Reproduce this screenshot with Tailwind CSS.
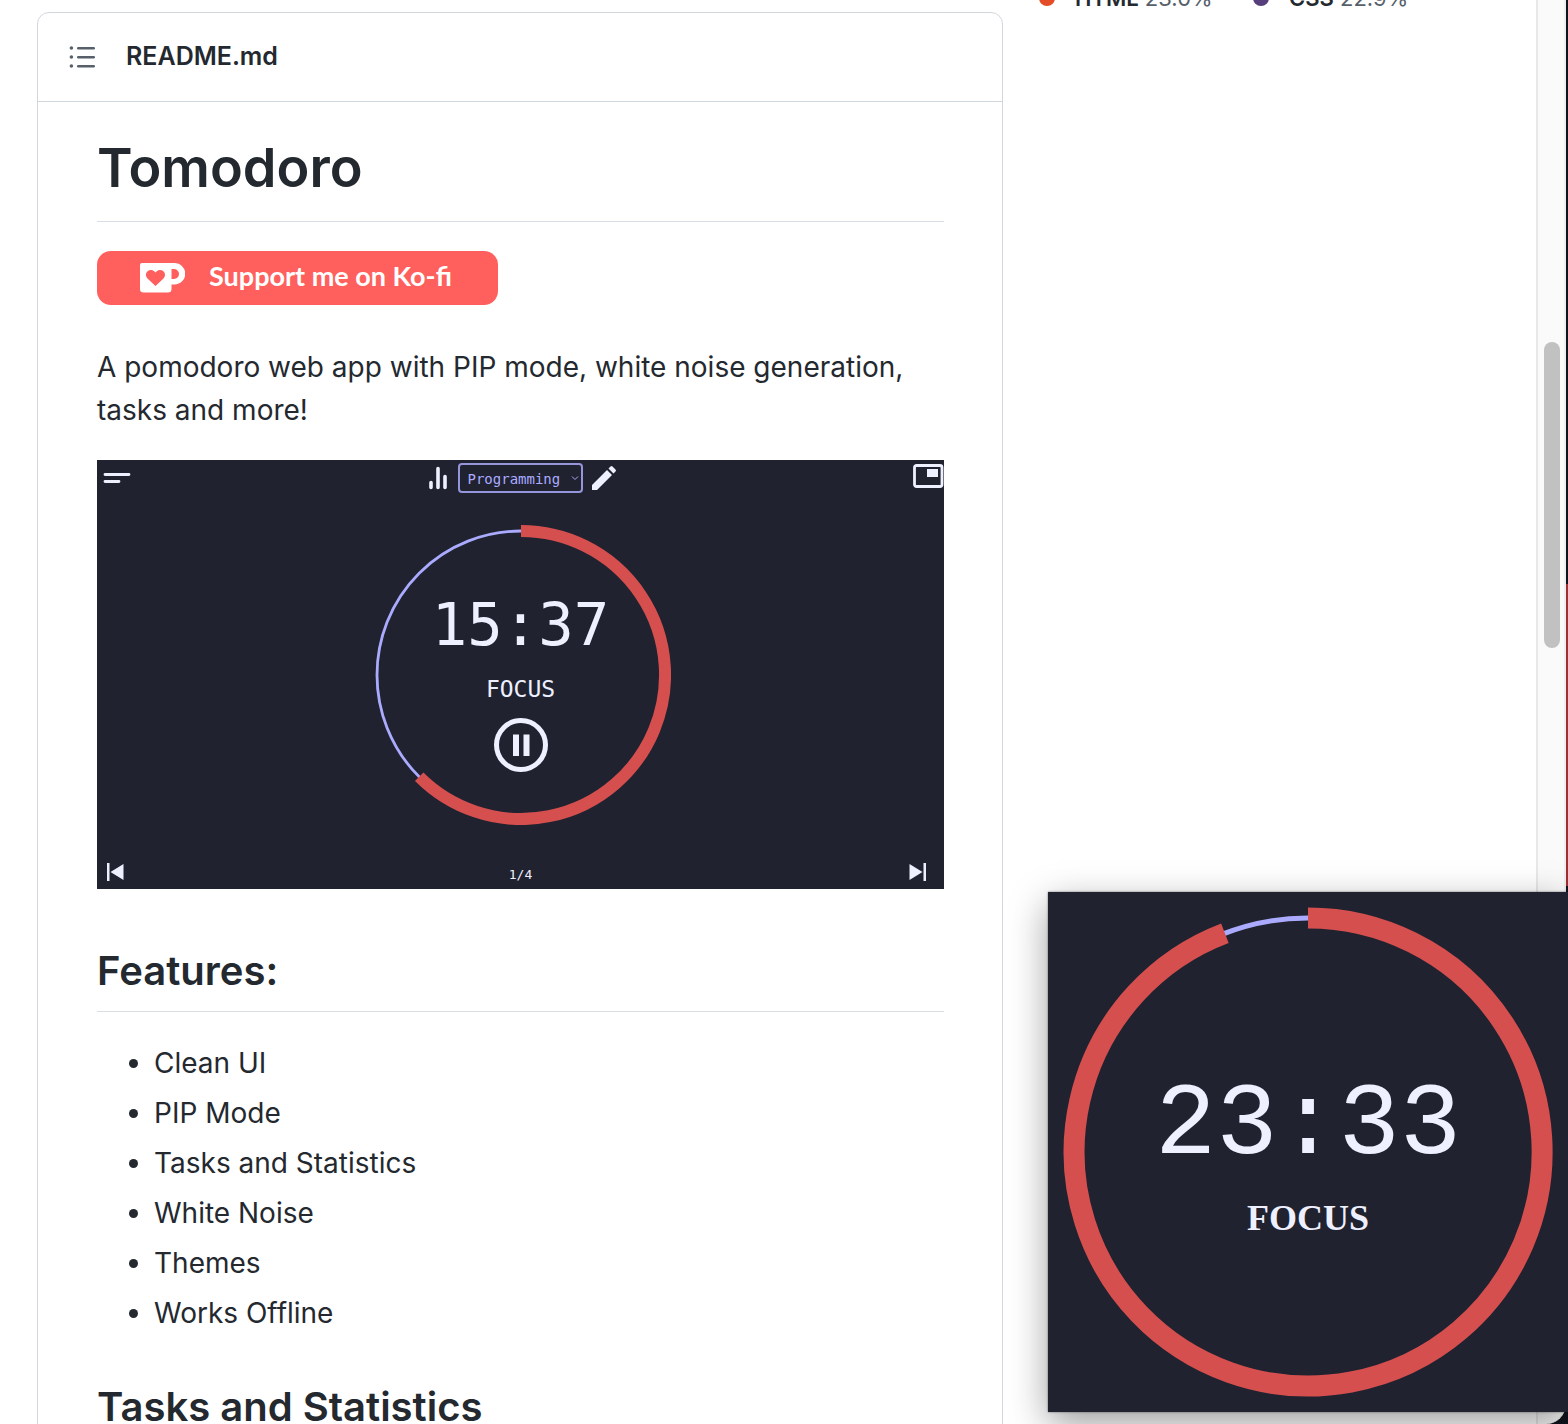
<!DOCTYPE html>
<html lang="en">
<head>
<meta charset="utf-8">
<meta name="viewport" content="width=device-width, initial-scale=1">
<title>Tomodoro README</title>
<script src="https://cdn.jsdelivr.net/npm/@tailwindcss/browser@4"></script>
</head>
<body class="h-screen overflow-hidden bg-[#10131c] font-['Inter',sans-serif] text-[#24292f]">
<div class="relative flex h-full">
  <!-- Page content -->
  <div class="grid min-w-0 flex-1 grid-cols-[966fr_533fr] overflow-hidden bg-white pl-[37px]">
    <main class="mt-3 h-[1500px] min-w-0 rounded-t-xl border border-[#d0d7de]">
      <header class="flex h-[89px] items-center border-b border-[#d0d7de] pl-[30px]">
        <button type="button" aria-label="Table of contents" class="mr-7">
          <svg class="block h-[30px] w-[30px]" viewBox="0 0 30 30" fill="#57606a">
            <circle cx="3.4" cy="6" r="1.8"/><circle cx="3.4" cy="15" r="1.8"/><circle cx="3.4" cy="24" r="1.8"/>
            <rect x="9" y="5" width="18" height="2.6" rx="1.3"/><rect x="9" y="14" width="18" height="2.6" rx="1.3"/><rect x="9" y="23" width="18" height="2.6" rx="1.3"/>
          </svg>
        </button>
        <a href="#readme" class="text-[25px] font-semibold">README.md</a>
      </header>
      <article id="readme" class="pt-[30px] pr-[58px] pl-[59px]">
        <h1 class="border-b border-[#d8dee4] pb-[17px] text-[54px] leading-[72px] font-semibold">Tomodoro</h1>
        <a href="#kofi" class="mt-[29px] flex h-[54px] w-[401px] items-center rounded-[14px] bg-[#ff5f5d] pl-[43px] font-['Lato',sans-serif] text-[27px] font-bold text-white">
          <svg class="mr-6 h-[30px] w-[45px]" viewBox="0 0 45 30">
            <path fill="#fff" fill-rule="evenodd" d="M2 0H34.500a10.500 10.500 0 0 1 0 21.500H31.500V26a3.500 3.500 0 0 1-3.500 3.500H3.500A3.500 3.500 0 0 1 0 26V2A2 2 0 0 1 2 0ZM31.500 6V16H34a5 5 0 0 0 0-10Z"/>
            <path fill="#ff5f5d" d="M15.500 23 7.500 15.500C3.500 11 8 5.500 12.500 7.200Q14.500 8 15.500 9.500Q16.500 8 18.500 7.200C23 5.500 27.500 11 23.500 15.500Z"/>
          </svg>
          <span class="pb-1">Support me on Ko-fi</span>
        </a>
        <p class="mt-[41px] text-[28px] leading-[43px]">A pomodoro web app with PIP mode, white noise generation, tasks and more!</p>

        <!-- App preview -->
        <section aria-label="Tomodoro timer" class="mt-7 grid aspect-[847/429] bg-[#20222f] font-['DejaVu_Sans_Mono',monospace] text-[#eeefff]">
          <div class="col-start-1 row-start-1 flex items-start justify-between self-start pt-[3px]">
            <button type="button" aria-label="Menu" class="w-[106px] pt-2 pl-1.5">
              <svg class="block h-4 w-7" viewBox="0 0 28 16" stroke="#eeefff" stroke-width="2.800" stroke-linecap="round"><path d="M2 3.500H26M2 10.500H16"/></svg>
            </button>
            <div class="flex items-center">
              <button type="button" aria-label="Statistics" class="mr-2.5">
                <svg class="block h-6 w-5" viewBox="0 0 20 24" stroke="#eeefff" stroke-width="3.600" stroke-linecap="round"><path d="M3 16.500V21.500M10 2.500V21.500M17 10.500V21.500"/></svg>
              </button>
              <div class="relative">
                <select aria-label="Task" class="block h-[30px] w-[125px] appearance-none rounded border-2 border-[#9495da] bg-transparent pt-0.5 pl-2 text-[14px] text-[#aaabff]"><option>Programming</option></select>
                <svg class="pointer-events-none absolute top-3 right-1 h-1.5 w-2" viewBox="0 0 8 6" fill="none" stroke="#aaabff"><path d="M1 1.500 4 4.500 7 1.500"/></svg>
              </div>
              <button type="button" aria-label="Edit" class="ml-2">
                <svg class="block h-[26px] w-[26px]" viewBox="0 0 26 26" fill="#eeefff"><path d="M1 20 16 5 21 10 6 25H1ZM17.500 3.500 19.500 1.500Q20.500.500 21.500 1.500L24.500 4.500Q25.500 5.500 24.500 6.500L22.500 8.500Z"/></svg>
              </button>
            </div>
            <div class="flex w-[103px] justify-end">
              <button type="button" aria-label="Picture in picture">
                <svg class="block h-[26px] w-8" viewBox="0 0 32 26"><rect x="2.500" y="2.500" width="27.500" height="21" rx="2" fill="none" stroke="#eeefff" stroke-width="2.800"/><path fill="#eeefff" d="M15 6H26V14H15Z"/></svg>
              </button>
            </div>
          </div>
          <div class="col-start-1 row-start-1 grid place-self-center">
            <svg class="col-start-1 row-start-1 h-[300px] w-[300px]" viewBox="0 0 300 300" fill="none">
              <circle cx="150" cy="150" r="144" stroke="#aaabff" stroke-width="2.800"/>
              <path d="M150 6A144 144 0 1 1 48.200 251.800" stroke="#d64f4f" stroke-width="12"/>
            </svg>
            <div class="col-start-1 row-start-1 flex flex-col items-center pt-[68px]">
              <div class="text-[59px] leading-[64px]">15:37</div>
              <div class="mt-[18px] text-[23px] leading-7">FOCUS</div>
              <button type="button" aria-label="Pause" class="mt-[14px]">
                <svg class="block h-[56px] w-[56px]" viewBox="0 0 56 56"><circle cx="28" cy="28" r="24.500" fill="none" stroke="#eeefff" stroke-width="5"/><path fill="#eeefff" d="M20 17.500H26V39H20ZM30.500 17.500H36.500V39H30.500Z"/></svg>
              </button>
            </div>
          </div>
          <div class="col-start-1 row-start-1 flex items-center justify-between self-end pr-[17px] pb-2 pl-[9px]">
            <button type="button" aria-label="Previous"><svg class="block h-[18px] w-[18px]" viewBox="0 0 18 18" fill="#eeefff"><path d="M1 0H3.500V18H1ZM17.500 1V17L4.500 9Z"/></svg></button>
            <span class="pt-1.5 pl-2 text-[13px] leading-3">1/4</span>
            <button type="button" aria-label="Next"><svg class="block h-[18px] w-[18px]" viewBox="0 0 18 18" fill="#eeefff"><path d="M14.500 0H17V18H14.500ZM.500 1V17L13.500 9Z"/></svg></button>
          </div>
        </section>

        <h2 class="mt-[55px] border-b border-[#d8dee4] pb-[13px] text-[40px] leading-[54px] font-semibold">Features:</h2>
        <ul class="mt-[30px] flex list-disc flex-col gap-[7px] pl-[57px] text-[28px] leading-[43px]">
          <li>Clean UI</li>
          <li>PIP Mode</li>
          <li>Tasks and Statistics</li>
          <li>White Noise</li>
          <li>Themes</li>
          <li>Works Offline</li>
        </ul>
        <h2 class="mt-[45px] border-b border-[#d8dee4] pb-[13px] text-[40px] leading-[54px] font-semibold">Tasks and Statistics</h2>
      </article>
    </main>
    <aside aria-label="Languages" class="-mt-4 pl-9">
      <ul class="flex text-[22px] leading-7">
        <li class="flex w-[214px] items-center gap-5"><span class="h-4 w-4 rounded-full bg-[#e34c26]"></span><span><b class="font-semibold">HTML</b> <span class="text-[#57606a]">23.0%</span></span></li>
        <li class="flex items-center gap-5"><span class="h-4 w-4 rounded-full bg-[#563d7c]"></span><span><b class="font-semibold">CSS</b> <span class="text-[#57606a]">22.9%</span></span></li>
      </ul>
    </aside>
  </div>

  <!-- Scroll track, with the desktop showing past the window's edge -->
  <div class="w-[30px] rounded-br-[20px] border-r-2 border-l-2 border-[#e8e8e8] border-r-[#efefef] bg-[#fafafa] pt-[342px] pl-1.5">
    <div class="h-[306px] w-4 rounded-full bg-[#c1c1c1]"></div>
  </div>
  <div class="w-0.5 pt-[584px]"><div class="h-[302px] bg-[#9b3035]"></div></div>

  <!-- Floating timer -->
  <section aria-label="Picture in picture timer" class="absolute right-0 bottom-3 grid h-[520px] w-[520px] bg-[#20222f] text-[#eeefff] shadow-[0_12px_36px_rgba(0,0,0,0.38),0_0_2px_rgba(0,0,0,0.5)]">
    <svg class="col-start-1 row-start-1 h-full w-full" viewBox="0 0 520 520" fill="none">
      <circle cx="260" cy="260" r="234" stroke="#aaabff" stroke-width="5"/>
      <path d="M260 26A234 234 0 1 1 176.900 41.300" stroke="#d64f4f" stroke-width="21"/>
    </svg>
    <div class="col-start-1 row-start-1 flex flex-col items-center pt-[174px]">
      <div class="font-['Liberation_Mono',monospace] text-[102px] leading-[120px]">23:33</div>
      <div class="mt-3 font-['Liberation_Serif',serif] text-4xl font-bold">FOCUS</div>
    </div>
  </section>
</div>
</body>
</html>
